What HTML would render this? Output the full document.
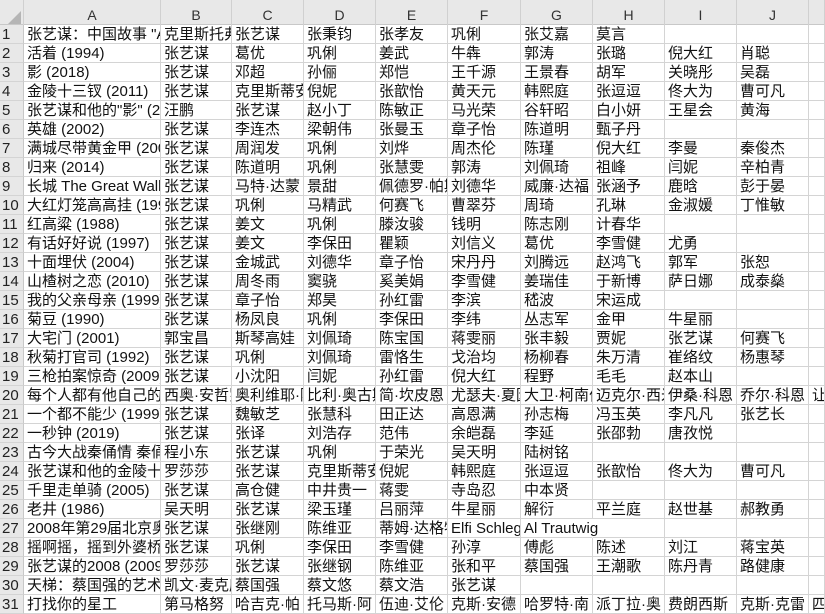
<!DOCTYPE html>
<html><head><meta charset="utf-8"><style>
*{margin:0;padding:0;box-sizing:border-box}
body{width:825px;height:603px;overflow:hidden;background:#fff;font-family:"Liberation Sans","Noto Sans CJK SC",sans-serif;font-size:15px;color:#111;position:relative}
.hd{position:absolute;left:0;top:0;width:825px;height:25px;background:#e8e8e8;border-bottom:1px solid #c8c8c8;display:flex}
.hd div{height:25px;padding-top:6px;line-height:19px;text-align:center;font-size:14px;color:#333;border-right:1px solid #d0d0d0}
.r{position:absolute;left:0;height:19px;display:flex;width:825px}
.r span{height:19px;line-height:19px;white-space:nowrap;overflow:hidden;padding-left:3px;border-right:1px solid #d4d4d4;border-bottom:1px solid #d4d4d4;flex:none}
.r span:first-child{background:#e8e8e8;border-right:1px solid #c8c8c8;border-bottom:1px solid #d4d4d4;padding-left:2px;color:#222}
.r span.o{overflow:visible;position:relative;z-index:2}
.w0{width:24px}.wa{width:137px}.wb{width:71px}.wc{width:72px}.wk{width:16px}
.tri{position:absolute;left:8px;top:11px;width:0;height:0;border-left:13px solid transparent;border-bottom:13px solid #b5b5b5;z-index:3}
</style></head><body>
<div class="hd"><div class="w0"></div><div class="wa">A</div><div class="wb">B</div><div class="wc">C</div><div class="wc">D</div><div class="wc">E</div><div class="wc" style="width:73px">F</div><div class="wc">G</div><div class="wc">H</div><div class="wc">I</div><div class="wc">J</div><div class="wk"></div></div>
<div class="tri"></div>
<div id="g"></div>
<div class="r" style="top:25px"><span class="w0">1</span><span class="wa">张艺谋：中国故事 "A Cinema</span><span class="wb">克里斯托弗</span><span class="wc">张艺谋</span><span class="wc">张秉钧</span><span class="wc">张孝友</span><span class="wc" style="width:73px">巩俐</span><span class="wc">张艾嘉</span><span class="wc">莫言</span><span class="wc"></span><span class="wc"></span><span class="wk"></span></div>
<div class="r" style="top:44px"><span class="w0">2</span><span class="wa">活着 (1994)</span><span class="wb">张艺谋</span><span class="wc">葛优</span><span class="wc">巩俐</span><span class="wc">姜武</span><span class="wc" style="width:73px">牛犇</span><span class="wc">郭涛</span><span class="wc">张璐</span><span class="wc">倪大红</span><span class="wc">肖聪</span><span class="wk"></span></div>
<div class="r" style="top:63px"><span class="w0">3</span><span class="wa">影 (2018)</span><span class="wb">张艺谋</span><span class="wc">邓超</span><span class="wc">孙俪</span><span class="wc">郑恺</span><span class="wc" style="width:73px">王千源</span><span class="wc">王景春</span><span class="wc">胡军</span><span class="wc">关晓彤</span><span class="wc">吴磊</span><span class="wk"></span></div>
<div class="r" style="top:82px"><span class="w0">4</span><span class="wa">金陵十三钗 (2011)</span><span class="wb">张艺谋</span><span class="wc">克里斯蒂安</span><span class="wc">倪妮</span><span class="wc">张歆怡</span><span class="wc" style="width:73px">黄天元</span><span class="wc">韩熙庭</span><span class="wc">张逗逗</span><span class="wc">佟大为</span><span class="wc">曹可凡</span><span class="wk"></span></div>
<div class="r" style="top:101px"><span class="w0">5</span><span class="wa">张艺谋和他的"影" (2018)</span><span class="wb">汪鹏</span><span class="wc">张艺谋</span><span class="wc">赵小丁</span><span class="wc">陈敏正</span><span class="wc" style="width:73px">马光荣</span><span class="wc">谷轩昭</span><span class="wc">白小妍</span><span class="wc">王星会</span><span class="wc">黄海</span><span class="wk"></span></div>
<div class="r" style="top:120px"><span class="w0">6</span><span class="wa">英雄 (2002)</span><span class="wb">张艺谋</span><span class="wc">李连杰</span><span class="wc">梁朝伟</span><span class="wc">张曼玉</span><span class="wc" style="width:73px">章子怡</span><span class="wc">陈道明</span><span class="wc">甄子丹</span><span class="wc"></span><span class="wc"></span><span class="wk"></span></div>
<div class="r" style="top:139px"><span class="w0">7</span><span class="wa">满城尽带黄金甲 (2006)</span><span class="wb">张艺谋</span><span class="wc">周润发</span><span class="wc">巩俐</span><span class="wc">刘烨</span><span class="wc" style="width:73px">周杰伦</span><span class="wc">陈瑾</span><span class="wc">倪大红</span><span class="wc">李曼</span><span class="wc">秦俊杰</span><span class="wk"></span></div>
<div class="r" style="top:158px"><span class="w0">8</span><span class="wa">归来 (2014)</span><span class="wb">张艺谋</span><span class="wc">陈道明</span><span class="wc">巩俐</span><span class="wc">张慧雯</span><span class="wc" style="width:73px">郭涛</span><span class="wc">刘佩琦</span><span class="wc">祖峰</span><span class="wc">闫妮</span><span class="wc">辛柏青</span><span class="wk"></span></div>
<div class="r" style="top:177px"><span class="w0">9</span><span class="wa">长城 The Great Wall (2016)</span><span class="wb">张艺谋</span><span class="wc">马特·达蒙</span><span class="wc">景甜</span><span class="wc">佩德罗·帕斯卡</span><span class="wc" style="width:73px">刘德华</span><span class="wc">威廉·达福</span><span class="wc">张涵予</span><span class="wc">鹿晗</span><span class="wc">彭于晏</span><span class="wk"></span></div>
<div class="r" style="top:196px"><span class="w0">10</span><span class="wa">大红灯笼高高挂 (1991)</span><span class="wb">张艺谋</span><span class="wc">巩俐</span><span class="wc">马精武</span><span class="wc">何赛飞</span><span class="wc" style="width:73px">曹翠芬</span><span class="wc">周琦</span><span class="wc">孔琳</span><span class="wc">金淑媛</span><span class="wc">丁惟敏</span><span class="wk"></span></div>
<div class="r" style="top:215px"><span class="w0">11</span><span class="wa">红高粱 (1988)</span><span class="wb">张艺谋</span><span class="wc">姜文</span><span class="wc">巩俐</span><span class="wc">滕汝骏</span><span class="wc" style="width:73px">钱明</span><span class="wc">陈志刚</span><span class="wc">计春华</span><span class="wc"></span><span class="wc"></span><span class="wk"></span></div>
<div class="r" style="top:234px"><span class="w0">12</span><span class="wa">有话好好说 (1997)</span><span class="wb">张艺谋</span><span class="wc">姜文</span><span class="wc">李保田</span><span class="wc">瞿颖</span><span class="wc" style="width:73px">刘信义</span><span class="wc">葛优</span><span class="wc">李雪健</span><span class="wc">尤勇</span><span class="wc"></span><span class="wk"></span></div>
<div class="r" style="top:253px"><span class="w0">13</span><span class="wa">十面埋伏 (2004)</span><span class="wb">张艺谋</span><span class="wc">金城武</span><span class="wc">刘德华</span><span class="wc">章子怡</span><span class="wc" style="width:73px">宋丹丹</span><span class="wc">刘腾远</span><span class="wc">赵鸿飞</span><span class="wc">郭军</span><span class="wc">张恕</span><span class="wk"></span></div>
<div class="r" style="top:272px"><span class="w0">14</span><span class="wa">山楂树之恋 (2010)</span><span class="wb">张艺谋</span><span class="wc">周冬雨</span><span class="wc">窦骁</span><span class="wc">奚美娟</span><span class="wc" style="width:73px">李雪健</span><span class="wc">姜瑞佳</span><span class="wc">于新博</span><span class="wc">萨日娜</span><span class="wc">成泰燊</span><span class="wk"></span></div>
<div class="r" style="top:291px"><span class="w0">15</span><span class="wa">我的父亲母亲 (1999)</span><span class="wb">张艺谋</span><span class="wc">章子怡</span><span class="wc">郑昊</span><span class="wc">孙红雷</span><span class="wc" style="width:73px">李滨</span><span class="wc">嵇波</span><span class="wc">宋运成</span><span class="wc"></span><span class="wc"></span><span class="wk"></span></div>
<div class="r" style="top:310px"><span class="w0">16</span><span class="wa">菊豆 (1990)</span><span class="wb">张艺谋</span><span class="wc">杨凤良</span><span class="wc">巩俐</span><span class="wc">李保田</span><span class="wc" style="width:73px">李纬</span><span class="wc">丛志军</span><span class="wc">金甲</span><span class="wc">牛星丽</span><span class="wc"></span><span class="wk"></span></div>
<div class="r" style="top:329px"><span class="w0">17</span><span class="wa">大宅门 (2001)</span><span class="wb">郭宝昌</span><span class="wc">斯琴高娃</span><span class="wc">刘佩琦</span><span class="wc">陈宝国</span><span class="wc" style="width:73px">蒋雯丽</span><span class="wc">张丰毅</span><span class="wc">贾妮</span><span class="wc">张艺谋</span><span class="wc">何赛飞</span><span class="wk"></span></div>
<div class="r" style="top:348px"><span class="w0">18</span><span class="wa">秋菊打官司 (1992)</span><span class="wb">张艺谋</span><span class="wc">巩俐</span><span class="wc">刘佩琦</span><span class="wc">雷恪生</span><span class="wc" style="width:73px">戈治均</span><span class="wc">杨柳春</span><span class="wc">朱万清</span><span class="wc">崔络纹</span><span class="wc">杨惠琴</span><span class="wk"></span></div>
<div class="r" style="top:367px"><span class="w0">19</span><span class="wa">三枪拍案惊奇 (2009)</span><span class="wb">张艺谋</span><span class="wc">小沈阳</span><span class="wc">闫妮</span><span class="wc">孙红雷</span><span class="wc" style="width:73px">倪大红</span><span class="wc">程野</span><span class="wc">毛毛</span><span class="wc">赵本山</span><span class="wc"></span><span class="wk"></span></div>
<div class="r" style="top:386px"><span class="w0">20</span><span class="wa">每个人都有他自己的电影</span><span class="wb">西奥·安哲罗普洛斯</span><span class="wc">奥利维耶·阿萨亚斯</span><span class="wc">比利·奥古斯特</span><span class="wc">简·坎皮恩</span><span class="wc" style="width:73px">尤瑟夫·夏因</span><span class="wc">大卫·柯南伯格</span><span class="wc">迈克尔·西米诺</span><span class="wc">伊桑·科恩</span><span class="wc">乔尔·科恩</span><span class="wk">让</span></div>
<div class="r" style="top:405px"><span class="w0">21</span><span class="wa">一个都不能少 (1999)</span><span class="wb">张艺谋</span><span class="wc">魏敏芝</span><span class="wc">张慧科</span><span class="wc">田正达</span><span class="wc" style="width:73px">高恩满</span><span class="wc">孙志梅</span><span class="wc">冯玉英</span><span class="wc">李凡凡</span><span class="wc">张艺长</span><span class="wk"></span></div>
<div class="r" style="top:424px"><span class="w0">22</span><span class="wa">一秒钟 (2019)</span><span class="wb">张艺谋</span><span class="wc">张译</span><span class="wc">刘浩存</span><span class="wc">范伟</span><span class="wc" style="width:73px">余皑磊</span><span class="wc">李延</span><span class="wc">张邵勃</span><span class="wc">唐孜悦</span><span class="wc"></span><span class="wk"></span></div>
<div class="r" style="top:443px"><span class="w0">23</span><span class="wa">古今大战秦俑情 秦俑</span><span class="wb">程小东</span><span class="wc">张艺谋</span><span class="wc">巩俐</span><span class="wc">于荣光</span><span class="wc" style="width:73px">吴天明</span><span class="wc">陆树铭</span><span class="wc"></span><span class="wc"></span><span class="wc"></span><span class="wk"></span></div>
<div class="r" style="top:462px"><span class="w0">24</span><span class="wa">张艺谋和他的金陵十三钗</span><span class="wb">罗莎莎</span><span class="wc">张艺谋</span><span class="wc">克里斯蒂安</span><span class="wc">倪妮</span><span class="wc" style="width:73px">韩熙庭</span><span class="wc">张逗逗</span><span class="wc">张歆怡</span><span class="wc">佟大为</span><span class="wc">曹可凡</span><span class="wk"></span></div>
<div class="r" style="top:481px"><span class="w0">25</span><span class="wa">千里走单骑 (2005)</span><span class="wb">张艺谋</span><span class="wc">高仓健</span><span class="wc">中井贵一</span><span class="wc">蒋雯</span><span class="wc" style="width:73px">寺岛忍</span><span class="wc">中本贤</span><span class="wc"></span><span class="wc"></span><span class="wc"></span><span class="wk"></span></div>
<div class="r" style="top:500px"><span class="w0">26</span><span class="wa">老井 (1986)</span><span class="wb">吴天明</span><span class="wc">张艺谋</span><span class="wc">梁玉瑾</span><span class="wc">吕丽萍</span><span class="wc" style="width:73px">牛星丽</span><span class="wc">解衍</span><span class="wc">平兰庭</span><span class="wc">赵世基</span><span class="wc">郝教勇</span><span class="wk"></span></div>
<div class="r" style="top:519px"><span class="w0">27</span><span class="wa">2008年第29届北京奥运会</span><span class="wb">张艺谋</span><span class="wc">张继刚</span><span class="wc">陈维亚</span><span class="wc">蒂姆·达格特</span><span class="wc" style="width:73px">Elfi Schlegel</span><span class="wc o" style="border-right-color:transparent">Al Trautwig</span><span class="wc"></span><span class="wc"></span><span class="wc"></span><span class="wk"></span></div>
<div class="r" style="top:538px"><span class="w0">28</span><span class="wa">摇啊摇，摇到外婆桥</span><span class="wb">张艺谋</span><span class="wc">巩俐</span><span class="wc">李保田</span><span class="wc">李雪健</span><span class="wc" style="width:73px">孙淳</span><span class="wc">傅彪</span><span class="wc">陈述</span><span class="wc">刘江</span><span class="wc">蒋宝英</span><span class="wk"></span></div>
<div class="r" style="top:557px"><span class="w0">29</span><span class="wa">张艺谋的2008 (2009)</span><span class="wb">罗莎莎</span><span class="wc">张艺谋</span><span class="wc">张继钢</span><span class="wc">陈维亚</span><span class="wc" style="width:73px">张和平</span><span class="wc">蔡国强</span><span class="wc">王潮歌</span><span class="wc">陈丹青</span><span class="wc">路健康</span><span class="wk"></span></div>
<div class="r" style="top:576px"><span class="w0">30</span><span class="wa">天梯：蔡国强的艺术</span><span class="wb">凯文·麦克唐纳</span><span class="wc">蔡国强</span><span class="wc">蔡文悠</span><span class="wc">蔡文浩</span><span class="wc" style="width:73px">张艺谋</span><span class="wc"></span><span class="wc"></span><span class="wc"></span><span class="wc"></span><span class="wk"></span></div>
<div class="r" style="top:595px"><span class="w0">31</span><span class="wa">打找你的星工</span><span class="wb">第马格努</span><span class="wc">哈吉克·帕</span><span class="wc">托马斯·阿</span><span class="wc">伍迪·艾伦</span><span class="wc" style="width:73px">克斯·安德</span><span class="wc">哈罗特·南</span><span class="wc">派丁拉·奥</span><span class="wc">费朗西斯</span><span class="wc">克斯·克雷</span><span class="wk">四</span></div>
</body></html>
